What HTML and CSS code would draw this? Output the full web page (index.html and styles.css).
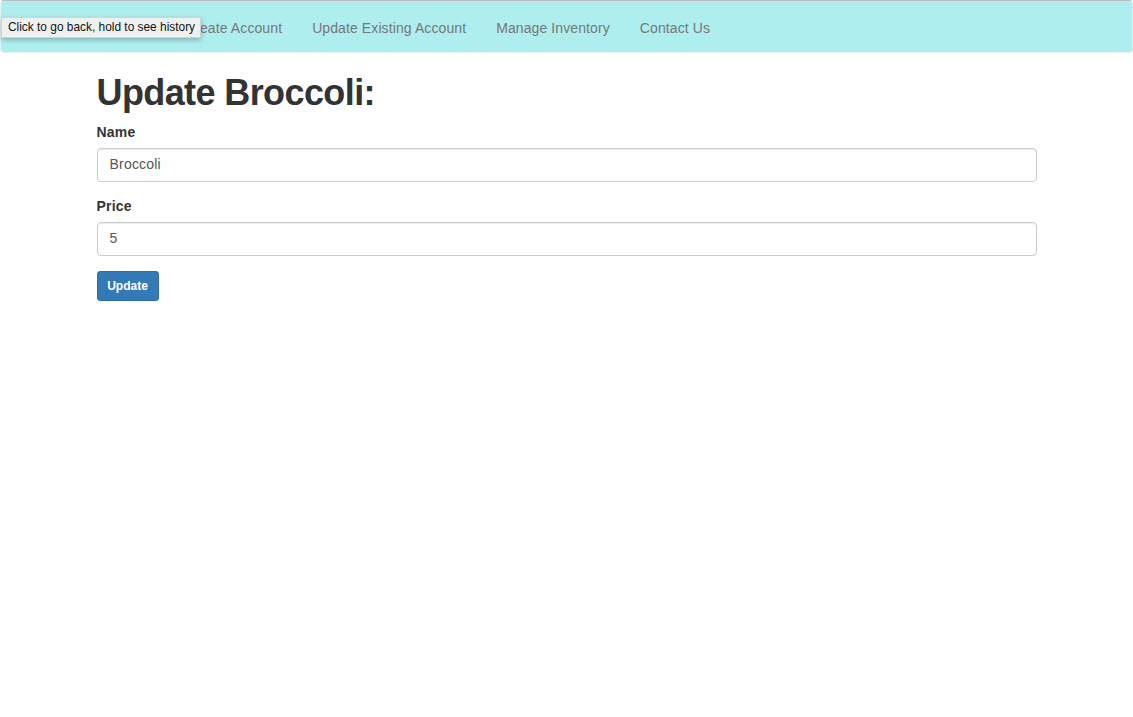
FILE: index.html
```html
<!DOCTYPE html>
<html>
<head>
<meta charset="utf-8">
<title>Update Broccoli</title>
<link rel="stylesheet" href="styles.css">
</head>
<body>
<nav class="navbar">
  <a class="brand" href="#" aria-label="Home"></a>
  <ul class="nav">
    <li><a href="#">Create Account</a></li>
    <li><a href="#">Update Existing Account</a></li>
    <li><a href="#">Manage Inventory</a></li>
    <li><a href="#">Contact Us</a></li>
  </ul>
  <div class="tooltip">Click to go back, hold to see history</div>
</nav>
<main class="container">
  <h1 class="title">Update Broccoli:</h1>
  <form class="form">
    <div class="form-group">
      <label class="label" for="name">Name</label>
      <input class="input" id="name" type="text" value="Broccoli">
    </div>
    <div class="form-group">
      <label class="label" for="price">Price</label>
      <input class="input" id="price" type="text" value="5">
    </div>
    <button class="btn" type="button">Update</button>
  </form>
</main>
</body>
</html>
```
FILE: styles.css
```css
* { box-sizing: border-box; }
html, body { margin: 0; padding: 0; }
body {
  font-family: "Liberation Sans", Arial, sans-serif;
  font-size: 14px;
  line-height: 1.42857;
  color: #333;
  background: #fff;
  letter-spacing: 0.2px;
}
.navbar {
  position: relative;
  display: flex;
  align-items: stretch;
  height: 53px;
  background: #afeeee;
  border: 1px solid #e4f4f4;
  border-top-color: #bdbdbd;
  border-radius: 4px;
}
.brand {
  display: block;
  flex: 0 0 169px;
}
.nav {
  display: flex;
  list-style: none;
  margin: 0;
  padding: 0;
}
.nav a {
  display: block;
  padding: 17px 15px 13px;
  line-height: 20px;
  color: #777;
  text-decoration: none;
  font-size: 14px;
  letter-spacing: 0.1px;
}
.tooltip {
  position: absolute;
  left: 0;
  top: 16px;
  width: 200px;
  height: 21px;
  padding: 0 0 0 6px;
  background: #eff1f1;
  border: 1px solid #d2d4d4;
  box-shadow: 0 2px 5px rgba(0,0,0,0.25);
  font-family: "Liberation Sans", Arial, sans-serif;
  font-size: 11.9px;
  letter-spacing: 0;
  line-height: 19px;
  color: #111;
  white-space: nowrap;
}
.container {
  width: 970px;
  margin: 0 auto;
  padding: 0 15px;
}
.title {
  margin: 20px 0 10px;
  font-size: 36px;
  font-weight: 700;
  letter-spacing: -0.6px;
  line-height: 1.1;
  color: #333;
}
.form-group { margin-bottom: 15px; }
.label {
  display: block;
  margin-bottom: 5px;
  font-weight: 700;
}
.input {
  display: block;
  width: 100%;
  height: 34px;
  padding: 5px 12px 7px;
  font-family: inherit;
  font-size: 14px;
  letter-spacing: 0.2px;
  line-height: 1.42857;
  color: #555;
  background: #fff;
  border: 1px solid #ccc;
  border-radius: 4px;
  box-shadow: inset 0 1px 1px rgba(0,0,0,0.075);
}
.btn {
  display: inline-block;
  width: 62px;
  padding: 5px 0;
  text-align: center;
  font-family: inherit;
  font-size: 12px;
  font-weight: 700;
  letter-spacing: 0;
  line-height: 1.5;
  color: #fff;
  background: #337ab7;
  border: 1px solid #2e6da4;
  border-radius: 3px;
  cursor: pointer;
}
```
